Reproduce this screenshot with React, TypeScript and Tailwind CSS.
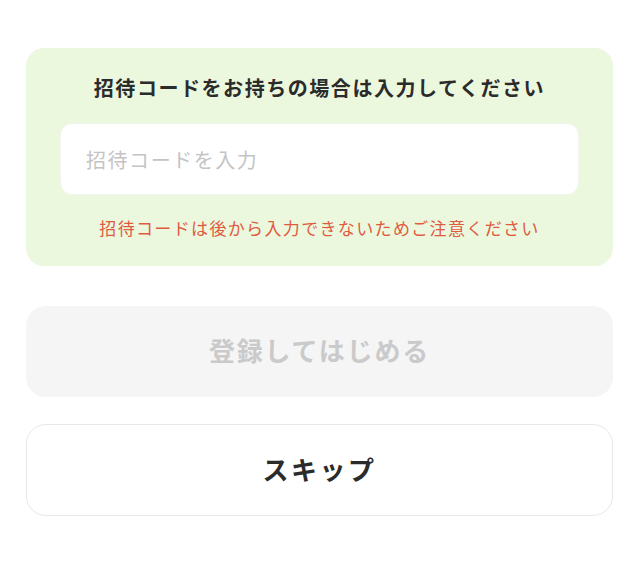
export default function App() {
  return (
    <div
      className="min-h-[563px] bg-white px-[26px] pt-[48px] pr-[27px]"
      style={{ fontFamily: '"Noto Sans CJK JP", "Noto Sans", sans-serif' }}
    >
      <div className="flex flex-col items-center rounded-[18px] bg-[#ebf8de] px-[34px] pt-[26px] pb-[26px]">
        <p className="text-[20px] leading-[28px] font-bold text-[#2b2b2b] tracking-[1.55px]">
          招待コードをお持ちの場合は入力してください
        </p>
        <input
          type="text"
          placeholder="招待コードを入力"
          className="mt-[21px] h-[72px] w-full rounded-[12px] border border-[#f1f5ee] bg-white px-[25px] text-[20px] text-[#2b2b2b] tracking-[1.55px] placeholder:text-[#c4c4c4] outline-none"
        />
        <p className="mt-[21px] text-[17px] leading-[24px] text-[#e05a3e] tracking-[1.35px]">
          招待コードは後から入力できないためご注意ください
        </p>
      </div>

      <button
        disabled
        className="mt-[40px] flex h-[91px] w-full items-center justify-center rounded-[20px] bg-[#f5f5f5] pb-[4px] text-[26px] font-bold text-[#cacaca] tracking-[1.8px]"
      >
        登録してはじめる
      </button>

      <button className="mt-[27px] flex h-[92px] w-full items-center justify-center rounded-[20px] border border-[#e8e8e8] bg-white pb-[4px] text-[26px] font-bold text-[#2b2b2b] tracking-[2.5px]">
        スキップ
      </button>
    </div>
  )
}
